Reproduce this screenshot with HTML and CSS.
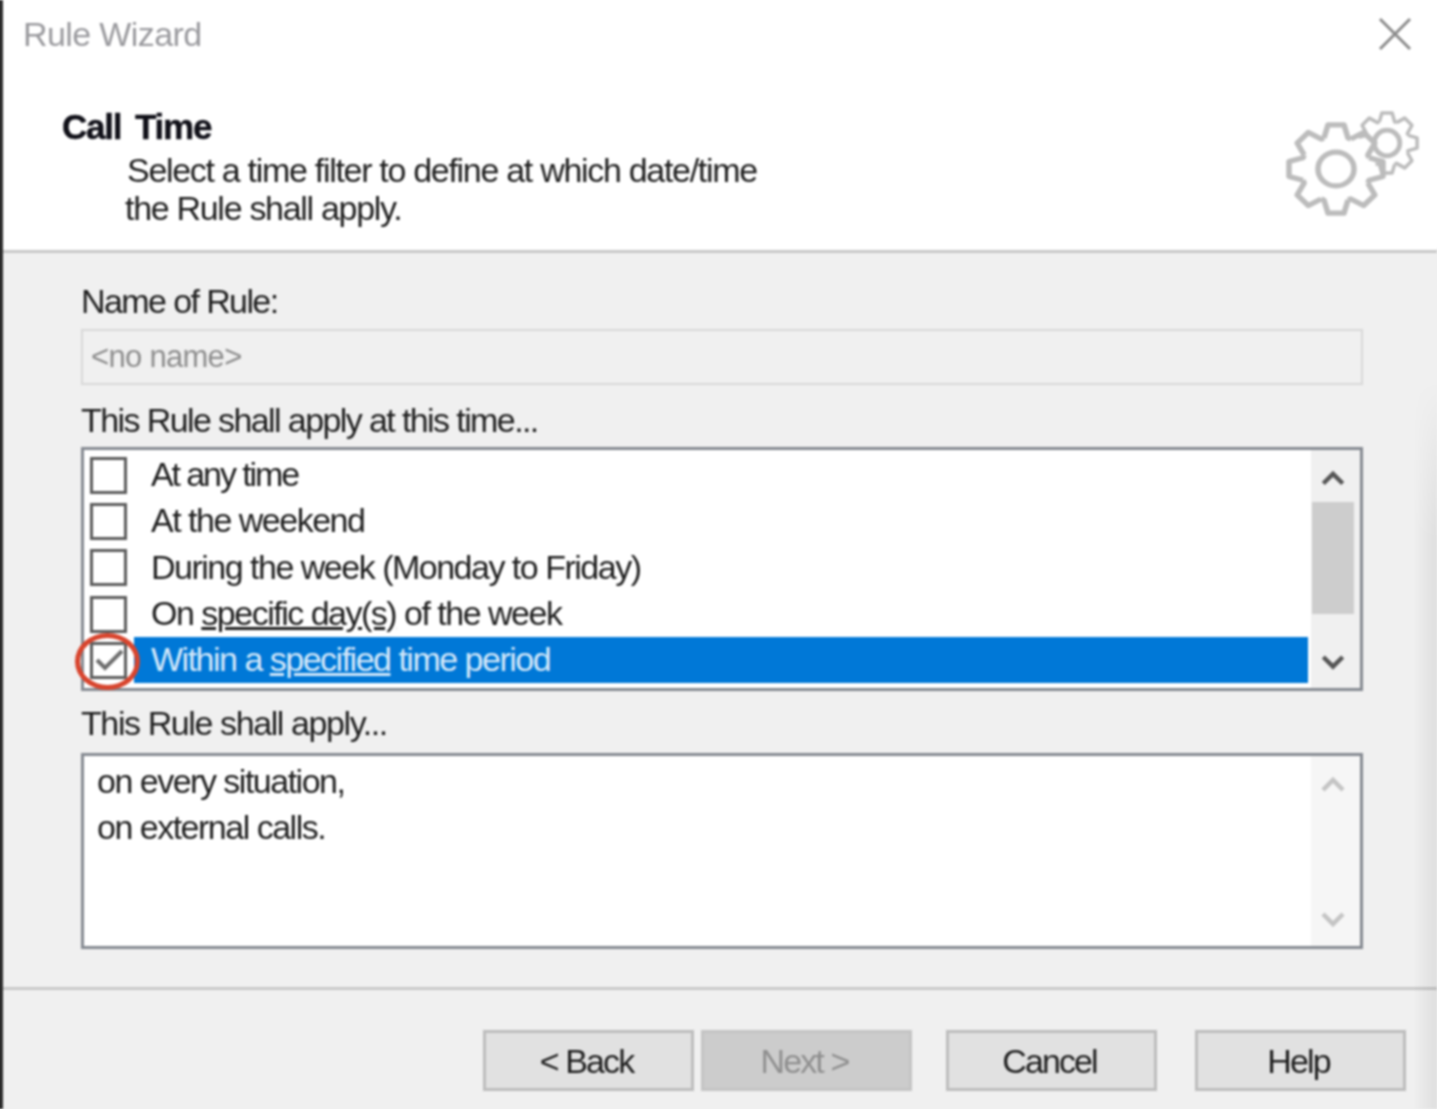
FILE: index.html
```html
<!DOCTYPE html>
<html lang="en">
<head>
    <meta charset="UTF-8">
    <title>Rule Wizard</title>
    <link rel="stylesheet" href="styles.css">
</head>
<body>
    <div class="dialog">
        <div class="top">
            <div class="titlebar">
                <span class="title">Rule Wizard</span>
                <svg class="close" width="34" height="34" viewBox="0 0 34 34"><path d="M2 2L32 32M32 2L2 32"/></svg>
            </div>
            <div class="heading">
                <div class="heading-text">
                    <h1>Call Time</h1>
                    <p class="intro-one">Select a time filter to define at which date/time</p>
                    <p class="intro-two">the Rule shall apply.</p>
                </div>
                <svg class="gears" width="134" height="106" viewBox="0 0 134 106">
                    <defs>
                        <path id="tooth" d="M-12 -33L-8 -47H8L12 -33L14.85 -31.8"/>
                        <g id="gear">
                            <use href="#tooth"/>
                            <use href="#tooth" transform="rotate(45)"/>
                            <use href="#tooth" transform="rotate(90)"/>
                            <use href="#tooth" transform="rotate(135)"/>
                            <use href="#tooth" transform="rotate(180)"/>
                            <use href="#tooth" transform="rotate(225)"/>
                            <use href="#tooth" transform="rotate(270)"/>
                            <use href="#tooth" transform="rotate(315)"/>
                        </g>
                    </defs>
                    <g class="gear-small" transform="translate(101 32) scale(.64)"><use href="#gear"/><circle r="20"/></g>
                    <g transform="translate(50 58) scale(1 .94)"><circle class="gear-fill" r="40"/><use href="#gear"/><circle r="18"/></g>
                </svg>
            </div>
        </div>

        <div class="main">
            <label class="field-label">Name of Rule:</label>
            <div class="name-input">&lt;no name&gt;</div>

            <label class="field-label second">This Rule shall apply at this time...</label>
            <div class="box list-box">
                <div class="rows">
                    <div class="row"><span class="check"></span><span class="row-text tight">At any time</span></div>
                    <div class="row"><span class="check"></span><span class="row-text">At the weekend</span></div>
                    <div class="row"><span class="check"></span><span class="row-text">During the week (Monday to Friday)</span></div>
                    <div class="row"><span class="check"></span><span class="row-text">On <u>specific day(s)</u> of the week</span></div>
                    <div class="row selected">
                        <span class="check">
                            <svg width="31" height="31" viewBox="0 0 31 31"><path d="M4 15L12 23L29 6"/></svg>
                        </span>
                        <span class="row-text">Within a <u>specified</u> time period</span>
                        <span class="ring"></span>
                    </div>
                </div>
                <div class="scrollbar">
                    <svg class="arrow" width="24" height="16" viewBox="0 0 24 16"><path d="M2 14L12 4L22 14"/></svg>
                    <div class="thumb"></div>
                    <svg class="arrow" width="24" height="16" viewBox="0 0 24 16"><path d="M2 2L12 12L22 2"/></svg>
                </div>
            </div>

            <label class="field-label third">This Rule shall apply...</label>
            <div class="box summary-box">
                <div class="summary">
                    <p>on every situation,</p>
                    <p>on external calls.</p>
                </div>
                <div class="scrollbar faded">
                    <svg class="arrow" width="24" height="16" viewBox="0 0 24 16"><path d="M2 14L12 4L22 14"/></svg>
                    <svg class="arrow" width="24" height="16" viewBox="0 0 24 16"><path d="M2 2L12 12L22 2"/></svg>
                </div>
            </div>
        </div>

        <div class="footer">
            <button class="btn">&lt; Back</button>
            <button class="btn disabled">Next &gt;</button>
            <button class="btn cancel">Cancel</button>
            <button class="btn help">Help</button>
        </div>
        <div class="edge-shade"></div>
    </div>
</body>
</html>
```

FILE: styles.css
```css
* {
    margin: 0;
    padding: 0;
    box-sizing: border-box;
    font-family: "Liberation Sans", Arial, sans-serif;
}
html, body {
    width: 1437px;
    height: 1109px;
    overflow: hidden;
    background: #f0f0f0;
}
.dialog {
    position: relative;
    width: 1437px;
    height: 1109px;
    border-left: 3px solid #2a2a2a;
    box-shadow: -5px 0 0 #2a2a2a, 5px 0 0 #f0f0f0, 0 5px 0 #f0f0f0;
    color: #1e1e1e;
    font-size: 34px;
    letter-spacing: -1.5px;
    filter: blur(1px);
}
.top {
    height: 253px;
    background: #fff;
    border-bottom: 3px solid #c8c8c8;
    box-shadow: 0 -5px 0 #fff, 5px -5px 0 #fff;
}
.titlebar {
    display: flex;
    justify-content: space-between;
    align-items: center;
    height: 68px;
    padding: 0 25px 0 20px;
}
.title {
    color: #9a9a9e;
    letter-spacing: -0.6px;
}
.close path {
    stroke: #8c8c8c;
    stroke-width: 3;
    fill: none;
}
.heading {
    display: flex;
    justify-content: space-between;
    padding: 0 17px 0 59px;
}
h1 {
    font-size: 35px;
    line-height: 42px;
    letter-spacing: -1.2px;
    word-spacing: 5px;
    margin-top: 38px;
    color: #101018;
    -webkit-text-stroke: 0.4px #101018;
}
.heading-text p {
    line-height: 38px;
    letter-spacing: -1.3px;
}
.intro-one {
    padding-left: 65px;
    margin-top: 3px;
}
.intro-two {
    padding-left: 63px;
}
.gears {
    margin-top: 43px;
}
.gears path, .gears circle {
    fill: none;
    stroke: #bcbcbc;
    stroke-width: 5.5;
    stroke-linejoin: round;
}
.gears .gear-small path, .gears .gear-small circle {
    stroke-width: 7.5;
}
.gears .gear-fill {
    fill: #fff;
    stroke: none;
}
.main {
    padding: 0 74px 0 78px;
    height: 737px;
    border-bottom: 3px solid #c8c8c8;
}
.field-label {
    display: block;
    line-height: 38px;
    padding-top: 29px;
    height: 76px;
    letter-spacing: -1.6px;
}
.field-label.second {
    padding-top: 16px;
    height: 62px;
}
.field-label.third {
    padding-top: 13px;
    height: 62px;
    letter-spacing: -1.4px;
}
.name-input {
    height: 56px;
    border: 2px solid #d8d8d8;
    padding-left: 8px;
    font-size: 31px;
    line-height: 52px;
    color: #8d8d8d;
    letter-spacing: -0.7px;
}
.box {
    display: flex;
    background: #fff;
    border: 3px solid #858a91;
}
.list-box {
    height: 244px;
    padding-top: 2px;
}
.summary-box {
    height: 196px;
}
.rows {
    flex: 1;
}
.row {
    position: relative;
    display: flex;
    align-items: center;
    height: 46.3px;
    padding-left: 6px;
}
.check {
    display: block;
    flex: none;
    width: 37px;
    height: 37px;
    border: 3px solid #5c5c5c;
    background: #fff;
}
.check svg {
    display: block;
}
.check path {
    fill: none;
    stroke: #6e6e6e;
    stroke-width: 4;
}
.row-text {
    margin-left: 23px;
    flex: 1;
    height: 46px;
    line-height: 44px;
    padding-left: 1px;
}
.tight {
    letter-spacing: -2.1px;
}
.selected .row-text {
    margin-left: 7px;
    margin-right: 3px;
    padding-left: 17px;
    background: #0078d7;
    color: #d4e8fa;
}
.ring {
    position: absolute;
    left: -9px;
    top: -4px;
    width: 65px;
    height: 57px;
    border: 5px solid #d8452e;
    border-radius: 50%;
}
.scrollbar {
    display: flex;
    flex-direction: column;
    align-items: center;
    flex: none;
    width: 49px;
    margin-top: -2px;
    padding: 20px 6px 18px 0;
    background: #f0f0f0;
}
.arrow path {
    fill: none;
    stroke: #555;
    stroke-width: 4.5;
}
.thumb {
    flex: none;
    width: 42px;
    height: 112px;
    margin: 16px 0 41px;
    background: #cdcdcd;
}
.faded {
    justify-content: space-between;
    margin-top: 0;
    background: #f6f6f6;
}
.faded .arrow path {
    stroke: #c4c4c4;
}
.summary {
    flex: 1;
    padding: 2px 0 0 13px;
}
.summary p {
    line-height: 46px;
}
.footer {
    display: flex;
    padding: 40px 0 0 480px;
}
.btn {
    width: 211px;
    height: 61px;
    padding: 2px 4px 0 0;
    border: 3px solid #bdbdbd;
    background: #e1e1e1;
    color: #1e1e1e;
    font-size: 34px;
    letter-spacing: -1.9px;
}
.disabled {
    margin-left: 7px;
    background: #cccccc;
    border-color: #c4c4c4;
    color: #8f8f8f;
}
.cancel {
    margin-left: 34px;
}
.help {
    margin-left: 38px;
}
.edge-shade {
    position: absolute;
    top: 380px;
    right: 0;
    bottom: 0;
    width: 24px;
    background: linear-gradient(to right, rgba(0,0,0,0), rgba(0,0,0,0.07));
    -webkit-mask-image: linear-gradient(to bottom, transparent, #000 160px);
    mask-image: linear-gradient(to bottom, transparent, #000 160px);
}
```
